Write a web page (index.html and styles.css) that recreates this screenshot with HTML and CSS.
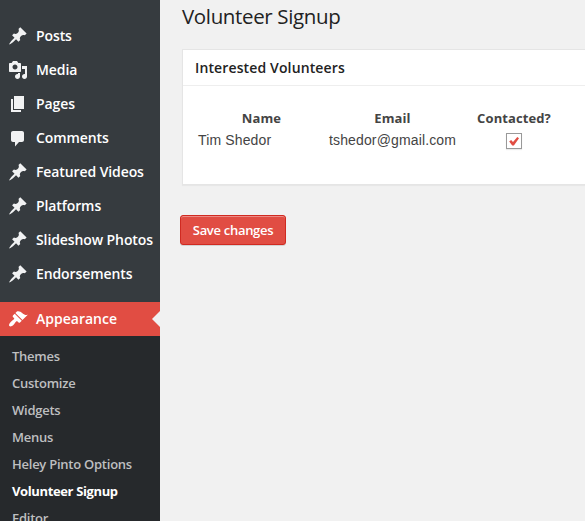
FILE: index.html
```html
<!DOCTYPE html>
<html lang="en">
<head>
    <meta charset="utf-8">
    <title>Volunteer Signup</title>
    <link rel="stylesheet" href="styles.css">
</head>
<body>
    <svg class="sprite" viewBox="0 0 20 20">
        <symbol id="icon-post" viewBox="0 0 20 20">
            <path d="M10.44 3.02l1.82-1.82 6.36 6.35-1.83 1.82c-1.05-.68-2.48-.57-3.41.36l-.75.75c-.92.93-1.04 2.35-.35 3.41l-1.83 1.82-2.41-2.41-2.8 2.79c-.42.42-3.38 2.71-3.8 2.29s1.86-3.39 2.28-3.81l2.79-2.79L4.1 9.36l1.83-1.82c1.05.69 2.48.57 3.4-.36l.75-.75c.93-.92 1.05-2.35.36-3.41z"/>
        </symbol>
        <symbol id="icon-media" viewBox="0 0 20 20">
            <path d="M13 11V4c0-.55-.45-1-1-1h-1.67L9 1H5L3.67 3H2c-.55 0-1 .45-1 1v7c0 .55.45 1 1 1h10c.55 0 1-.45 1-1zM7 4.5c1.38 0 2.5 1.12 2.5 2.5S8.38 9.5 7 9.5 4.5 8.38 4.5 7 5.62 4.5 7 4.5zM14 6h5v10.5c0 1.38-1.12 2.5-2.5 2.5S14 17.88 14 16.5s1.12-2.5 2.5-2.5c.17 0 .34.02.5.05V9h-3V6zm-4 8.05V13h2v3.5c0 1.38-1.12 2.5-2.5 2.5S7 17.88 7 16.5 8.12 14 9.5 14c.17 0 .34.02.5.05z"/>
        </symbol>
        <symbol id="icon-page" viewBox="0 0 20 20">
            <path d="M6 15V2h10v13H6zm-1 1h8v2H3V5h2v11z"/>
        </symbol>
        <symbol id="icon-comment" viewBox="0 0 20 20">
            <path d="M5 3h9c1.1 0 2 .9 2 2v7c0 1.1-.9 2-2 2h-3l-4 4.5V14H5c-1.1 0-2-.9-2-2V5c0-1.1.9-2 2-2z"/>
        </symbol>
        <symbol id="icon-brush" viewBox="0 0 20 20">
            <path d="M14.48 11.06L7.41 3.99l1.5-1.5c.5-.56 2.3-.47 3.51.32 1.21.8 1.43 1.28 2.91 2.1 1.18.64 2.45 1.26 4.45.85zm-.71.71L6.7 4.7 4.93 6.47c-.39.39-.39 1.02 0 1.41l1.06 1.06c.39.39.39 1.03 0 1.42-.6.6-1.43 1.11-2.21 1.69-.35.26-.7.53-1.01.84C1.43 14.23.4 16.08 1.4 17.07c.99 1 2.84-.03 4.18-1.36.31-.31.58-.66.85-1.02.57-.78 1.08-1.61 1.69-2.21.39-.39 1.02-.39 1.41 0l1.06 1.06c.39.39 1.02.39 1.41 0z"/>
        </symbol>
    </svg>
    <div class="app">
        <nav class="menu">
            <a class="menu-item"><svg class="icon"><use href="#icon-post"/></svg>Posts</a>
            <a class="menu-item"><svg class="icon"><use href="#icon-media"/></svg>Media</a>
            <a class="menu-item"><svg class="icon"><use href="#icon-page"/></svg>Pages</a>
            <a class="menu-item"><svg class="icon"><use href="#icon-comment"/></svg>Comments</a>
            <a class="menu-item"><svg class="icon"><use href="#icon-post"/></svg>Featured Videos</a>
            <a class="menu-item"><svg class="icon"><use href="#icon-post"/></svg>Platforms</a>
            <a class="menu-item"><svg class="icon"><use href="#icon-post"/></svg>Slideshow Photos</a>
            <a class="menu-item"><svg class="icon"><use href="#icon-post"/></svg>Endorsements</a>
            <a class="menu-item current"><svg class="icon"><use href="#icon-brush"/></svg>Appearance</a>
            <div class="submenu">
                <a class="submenu-item">Themes</a>
                <a class="submenu-item">Customize</a>
                <a class="submenu-item">Widgets</a>
                <a class="submenu-item">Menus</a>
                <a class="submenu-item">Heley Pinto Options</a>
                <a class="submenu-item active">Volunteer Signup</a>
                <a class="submenu-item">Editor</a>
            </div>
        </nav>
        <main class="content">
            <h2 class="title">Volunteer Signup</h2>
            <section class="postbox">
                <h3 class="postbox-title">Interested Volunteers</h3>
                <div class="volunteers">
                    <div class="column column-name">
                        <div class="heading">Name</div>
                        <div class="value">Tim Shedor</div>
                    </div>
                    <div class="column column-email">
                        <div class="heading">Email</div>
                        <div class="value">tshedor@gmail.com</div>
                    </div>
                    <div class="column column-contacted">
                        <div class="heading">Contacted?</div>
                        <div class="checkbox">
                            <svg class="check" viewBox="0 0 14 14"><path d="M2.2 7.5L4.1 6.1 6 8 10.3 3 12 4.2 6.9 11.6H5.2z"/></svg>
                        </div>
                    </div>
                </div>
            </section>
            <button class="button">Save changes</button>
        </main>
    </div>
</body>
</html>
```
FILE: styles.css
```css
html, body {
    margin: 0;
    height: 100%;
    overflow: hidden;
    background: #f1f1f1;
    font-family: "Open Sans", sans-serif;
}

.sprite {
    display: none;
}

.app {
    display: flex;
    height: 521px;
    overflow: hidden;
}

.menu {
    flex: none;
    box-sizing: border-box;
    width: 160px;
    padding-top: 19px;
    background: #363b3f;
}

.menu-item {
    display: flex;
    align-items: center;
    height: 34px;
    padding-left: 8px;
    color: #fff;
    font-size: 14px;
    font-weight: 600;
    letter-spacing: -.1px;
    line-height: 34px;
    white-space: nowrap;
}

.icon {
    flex: none;
    width: 20px;
    height: 20px;
    margin-right: 8px;
    fill: #f1f2f3;
}

.current {
    position: relative;
    margin-top: 11px;
    background: #e14d43;
    letter-spacing: 0;
}

.current .icon {
    fill: #fff;
}

.current::after {
    content: "";
    position: absolute;
    right: 0;
    top: 9px;
    border: 8px solid transparent;
    border-left-width: 0;
    border-right-color: #f1f1f1;
}

.submenu {
    height: 220px;
    padding-top: 7px;
    background: #26292c;
}

.submenu-item {
    display: block;
    padding-left: 12px;
    color: #bebfc0;
    font-size: 13px;
    font-weight: 600;
    letter-spacing: -.25px;
    line-height: 27px;
}

.submenu-item.active {
    color: #fff;
    font-weight: 700;
    letter-spacing: -.37px;
}

.content {
    flex: 1;
    min-width: 0;
    padding: 1px 0 0 20px;
}

.title {
    margin: 0 0 18px 2px;
    color: #222;
    font-size: 20.5px;
    font-weight: 400;
    letter-spacing: -.36px;
    line-height: 30px;
}

.postbox {
    box-sizing: border-box;
    height: 136px;
    margin-left: 2px;
    border: 1px solid #e5e5e5;
    border-right: 0;
    background: #fff;
    box-shadow: 0 1px 1px rgba(0, 0, 0, .04);
}

.postbox-title {
    margin: 0;
    padding-left: 12px;
    border-bottom: 1px solid #eee;
    color: #222;
    font-size: 14px;
    font-weight: 600;
    letter-spacing: .13px;
    line-height: 35px;
}

.volunteers {
    display: flex;
    padding: 21px 0 0 15px;
    color: #444;
}

.column {
    display: flex;
    flex-direction: column;
}

.column-name {
    width: 127px;
    margin-right: 4px;
}

.column-email {
    width: 127px;
    margin-right: 19px;
}

.column-contacted {
    width: 78px;
    align-items: center;
}

.heading {
    font-size: 13px;
    font-weight: 700;
    letter-spacing: .1px;
    line-height: 22px;
    text-align: center;
}

.value {
    font-family: "Liberation Sans", Arial, sans-serif;
    font-size: 14px;
    letter-spacing: .14px;
    line-height: 22px;
}

.checkbox {
    box-sizing: border-box;
    width: 16px;
    height: 16px;
    margin-top: 4px;
    border: 1px solid #999;
    background: #fff;
    box-shadow: 0 1px 1px rgba(0, 0, 0, .08);
}

.check {
    display: block;
    width: 14px;
    height: 14px;
    fill: #e14d43;
}

.button {
    display: block;
    width: 106px;
    height: 30px;
    margin-top: 30px;
    padding: 0;
    border: 1px solid #d02a21;
    border-radius: 3px;
    background: #e14d43;
    box-shadow: inset 0 1px 0 #ec8a85, 0 1px 0 rgba(0, 0, 0, .12);
    color: #fff;
    font-family: inherit;
    font-size: 13px;
    font-weight: 600;
    letter-spacing: -.3px;
    line-height: 28px;
}
```
